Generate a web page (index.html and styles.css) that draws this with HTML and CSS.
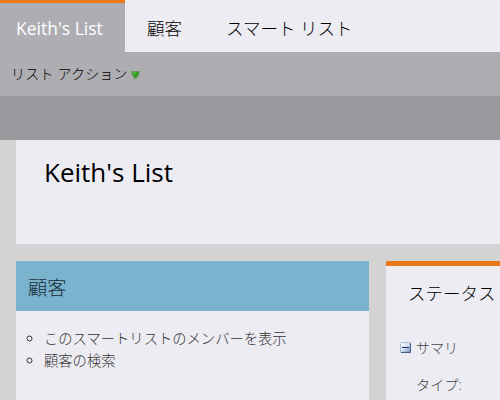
FILE: index.html
```html
<!DOCTYPE html>
<html lang="ja">
<head>
<meta charset="utf-8">
<title>Keith's List</title>
<link rel="stylesheet" href="styles.css">
</head>
<body>
<nav class="tabs">
  <a class="tab tab-active"><span>Keith's List</span></a>
  <a class="tab"><span>顧客</span></a>
  <a class="tab tab-smart"><span>スマート リスト</span></a>
</nav>
<div class="toolbar">
  <span class="action">リスト アクション</span>
  <svg class="arrow" width="9" height="8" viewBox="0 0 9 8">
    <path d="M0 0H9L8 4L5.5 8H3.5L1 4Z" fill="#6a9565"/>
    <path d="M1 1H8L7 4L5 7H4L2 4Z" fill="#379b24"/>
    <path d="M2 1H5L3.5 4Z" fill="#55bd3c"/>
  </svg>
</div>
<div class="band"></div>
<main class="content">
  <header class="title-card"><h1>Keith's List</h1></header>
  <div class="panels">
    <section class="panel customers">
      <h2>顧客</h2>
      <ul>
        <li>このスマートリストのメンバーを表示</li>
        <li>顧客の検索</li>
      </ul>
    </section>
    <section class="panel status">
      <h2>ステータス</h2>
      <div class="group">
        <svg width="11" height="11" viewBox="0 0 11 11">
          <defs><linearGradient id="shade" x1="0" y1="0" x2="1" y2="1"><stop offset="0" stop-color="#fff"/><stop offset=".5" stop-color="#d3deed"/><stop offset="1" stop-color="#6585b5"/></linearGradient></defs>
          <rect x=".5" y=".5" width="10" height="10" rx="1" fill="url(#shade)" stroke="#a9bad2"/>
          <path d="M10.5 1V10.5H1" fill="none" stroke="#3f5c8b"/>
          <path d="M2 5.5H9" stroke="#14305c"/>
        </svg>
        <span>サマリ</span>
      </div>
      <div class="field">タイプ:</div>
    </section>
  </div>
</main>
</body>
</html>
```
FILE: styles.css
```css
* { box-sizing: border-box; }
body {
  margin: 0;
  width: 500px;
  height: 400px;
  overflow: hidden;
  background: #d3d3d3;
  color: #000;
  font-family: "Open Sans", "Noto Sans CJK JP", sans-serif;
  font-weight: 300;
  white-space: nowrap;
}
h1, h2, ul { margin: 0; padding: 0; font-weight: 300; }
.tabs { display: flex; height: 52px; background: #edecf2; }
.tab {
  padding: 3px 0 0 22px;
  font-size: 17.5px;
  line-height: 50px;
}
.tab-active {
  width: 125px;
  padding: 0 0 0 16px;
  border-top: 3px solid #e97818;
  background: #aeadb2;
  color: #fff;
  font-weight: 400;
}
.tab-smart { padding-left: 44px; }
.toolbar {
  display: flex;
  align-items: center;
  height: 44px;
  padding: 0 0 2px 11px;
  background: #aeadb2;
  font-size: 14px;
  letter-spacing: .2px;
}
.arrow { margin: 3px 0 0 3px; }
.band { height: 44px; background: #9a999e; }
.content { padding-left: 16px; }
.title-card { height: 104px; padding: 13px 0 0 28px; background: #edecf2; }
h1 { font-size: 26px; font-weight: 400; line-height: 38px; }
.panels { display: flex; gap: 17px; margin-top: 17px; }
.panel { height: 139px; background: #edecf2; }
.customers { width: 353px; flex: none; }
.customers h2 {
  height: 50px;
  padding-left: 12px;
  background: #7ab3ce;
  color: #182d38;
  font-size: 19.3px;
  line-height: 54px;
}
ul { padding: 17px 0 0 28px; list-style: circle; }
li { color: #333; font-size: 14.3px; line-height: 22px; }
.status { flex: 1; border-top: 5px solid #e97818; }
.status h2 { padding-left: 22px; font-size: 17.5px; line-height: 54px; }
.group {
  display: flex;
  align-items: center;
  gap: 5px;
  height: 24px;
  margin-top: 15px;
  padding-left: 14px;
  color: #444;
  font-size: 14px;
}
.field { padding-left: 30px; color: #444; font-size: 14.2px; line-height: 24px; margin-top: 14px; }
```
